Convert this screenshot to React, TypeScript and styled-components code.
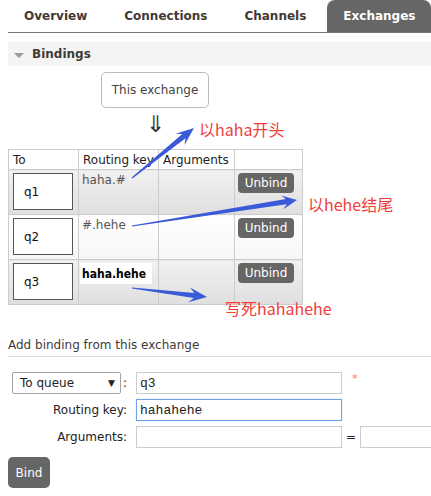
import React from "react";
import styled, { createGlobalStyle } from "styled-components";

const GlobalStyle = createGlobalStyle`
  html, body { margin: 0; padding: 0; background: #fff; overflow: hidden; }
  body {
    font-family: "DejaVu Sans", Verdana, sans-serif;
    font-size: 12px;
    color: #444;
  }
`;

const Page = styled.div`
  position: relative;
  width: 431px;
  height: 496px;
  overflow: hidden;
`;

const TabBar = styled.div`
  display: flex;
  margin-left: 8px;
  height: 32px;
  border-bottom: 1px solid #777;
`;

const Tab = styled.div<{ $active?: boolean }>`
  display: flex;
  align-items: center;
  padding: 0 16px;
  margin-right: 5px;
  font-weight: bold;
  white-space: nowrap;
  border-radius: 8px 8px 0 0;
  color: ${(p) => (p.$active ? "#fff" : "#3f3a36")};
  background: ${(p) => (p.$active ? "#666" : "transparent")};
`;

const Content = styled.div`
  margin-left: 8px;
`;

const SectionHeader = styled.div`
  margin-top: 9px;
  height: 24px;
  background: #f4f4f4;
  display: flex;
  align-items: center;
  gap: 8px;
  padding-left: 6px;
  font-weight: bold;
  color: #3f3a36;
`;

const Triangle = styled.span`
  width: 0;
  height: 0;
  margin-top: 2px;
  border-left: 5.5px solid transparent;
  border-right: 5.5px solid transparent;
  border-top: 5px solid #9a9a9a;
`;

const ExchangeBox = styled.div`
  margin: 6px 0 0 93px;
  width: 108px;
  height: 36px;
  box-sizing: border-box;
  border: 1px solid #bbb;
  border-radius: 5px;
  display: flex;
  align-items: center;
  justify-content: center;
  color: #444;
`;

const DownArrow = styled.div`
  margin-left: 93px;
  width: 108px;
  height: 41px;
  box-sizing: border-box;
  padding-top: 3px;
  text-align: center;
  font-size: 23px;
  line-height: 26px;
  font-weight: 300;
  color: #333;
`;

const Table = styled.table`
  border-collapse: collapse;
  table-layout: fixed;
  width: 294px;
`;

const HeadCell = styled.th`
  height: 20px;
  box-sizing: border-box;
  padding: 0 4px;
  border: 1px solid #ccc;
  text-align: left;
  font-weight: normal;
  color: #222;
  white-space: nowrap;
  overflow: hidden;
  background: #fff;
`;

const Cell = styled.td<{ $even?: boolean }>`
  height: 45px;
  box-sizing: border-box;
  padding: 2px 3px;
  border: 1px solid #ccc;
  vertical-align: top;
  color: #555;
  background: ${(p) =>
    p.$even
      ? "linear-gradient(#ffffff, #f6f6f6)"
      : "linear-gradient(#f1f1f1, #dfdfdf)"};
`;

const QBox = styled.div`
  width: 60px;
  height: 37px;
  box-sizing: border-box;
  margin: 1px 0 0 1px;
  border: 1px solid #555;
  background: #fff;
  display: flex;
  align-items: center;
  padding-left: 10px;
  color: #111;
`;

const KeyText = styled.div`
  padding-top: 1px;
  color: #555;
`;

const PastedKey = styled.span`
  display: inline-block;
  margin: 1px 0 0 -2px;
  padding: 4px 6px 3px 2px;
  background: #fff;
  color: #000;
  font-weight: bold;
  font-stretch: condensed;
  font-family: "DejaVu Sans Condensed", "DejaVu Sans", sans-serif;
`;

const SmallButton = styled.button`
  display: block;
  margin-top: 1px;
  width: 56px;
  height: 20px;
  padding: 0;
  border: none;
  border-radius: 4px;
  background: #666;
  color: #fff;
  font-family: "DejaVu Sans", Verdana, sans-serif;
  font-size: 12px;
`;

const AddHeading = styled.div`
  margin-top: 32px;
  padding-bottom: 3px;
  line-height: 16px;
  border-bottom: 1px solid #ddd;
  color: #3f3a36;
`;

const FormGrid = styled.div`
  margin-top: 15px;
  display: grid;
  grid-template-columns: 128px 206px 18px 100px;
  grid-auto-rows: 22px;
  row-gap: 5px;
`;

const LabelCell = styled.div`
  display: flex;
  align-items: center;
  justify-content: flex-end;
  padding-right: 9px;
  color: #222;
  white-space: nowrap;
`;

const SelectCell = styled(LabelCell)`
  justify-content: space-between;
  padding-left: 4px;
`;

const FakeSelect = styled.div`
  width: 109px;
  height: 22px;
  box-sizing: border-box;
  border: 1px solid #a3a3a3;
  border-radius: 2px;
  background: #fff;
  display: flex;
  align-items: center;
  justify-content: space-between;
  padding: 0 5px 0 7px;
  color: #222;
`;

const Caret = styled.span`
  font-size: 9px;
  color: #222;
`;

const TextInput = styled.input<{ $focused?: boolean }>`
  width: 100%;
  height: 22px;
  box-sizing: border-box;
  margin: 0;
  padding: 0 3px;
  border: 1px solid ${(p) => (p.$focused ? "#74a0e8" : "#ccc")};
  box-shadow: ${(p) => (p.$focused ? "0 0 1px 0 #9fc0f2" : "none")};
  border-radius: 0;
  outline: none;
  background: #fff;
  font-family: "Liberation Mono", "Courier New", monospace;
  font-size: 13px;
  color: #222;
`;

const Mark = styled.div<{ $required?: boolean }>`
  display: flex;
  align-items: ${(p) => (p.$required ? "flex-start" : "center")};
  justify-content: ${(p) => (p.$required ? "flex-start" : "center")};
  padding-left: ${(p) => (p.$required ? "10px" : "0")};
  color: ${(p) => (p.$required ? "#f27b7b" : "#222")};
  font-size: ${(p) => (p.$required ? "11px" : "12px")};
`;

const BindButton = styled.button`
  display: block;
  margin-top: 9px;
  width: 42px;
  height: 31px;
  padding: 0;
  border: none;
  border-radius: 5px;
  background: #666;
  color: #fff;
  font-family: "DejaVu Sans", Verdana, sans-serif;
  font-size: 12px;
`;

const Overlay = styled.svg`
  position: absolute;
  left: 0;
  top: 0;
  pointer-events: none;
`;

const Note = styled.span<{ $x: number; $y: number }>`
  position: absolute;
  left: ${(p) => p.$x}px;
  top: ${(p) => p.$y}px;
  font-family: "Noto Sans CJK SC", "Noto Sans", sans-serif;
  font-size: 16px;
  line-height: 18px;
  color: #f23c3c;
  white-space: nowrap;
`;

function arrowPoints(
  x0: number,
  y0: number,
  x1: number,
  y1: number,
  headLen: number,
  headHalf: number
): string {
  const dx = x1 - x0;
  const dy = y1 - y0;
  const L = Math.hypot(dx, dy);
  const ux = dx / L;
  const uy = dy / L;
  const nx = -uy;
  const ny = ux;
  const bx = x1 - ux * headLen;
  const by = y1 - uy * headLen;
  const sx = x1 - ux * headLen * 0.72;
  const sy = y1 - uy * headLen * 0.72;
  const shaft = 2.6;
  const tail = 0.6;
  const pts: [number, number][] = [
    [x0 + nx * tail, y0 + ny * tail],
    [sx + nx * shaft, sy + ny * shaft],
    [bx + nx * headHalf, by + ny * headHalf],
    [x1, y1],
    [bx - nx * headHalf, by - ny * headHalf],
    [sx - nx * shaft, sy - ny * shaft],
    [x0 - nx * tail, y0 - ny * tail],
  ];
  return pts.map((p) => `${p[0].toFixed(1)},${p[1].toFixed(1)}`).join(" ");
}

const bindings = [
  { queue: "q1", key: "haha.#", pasted: false },
  { queue: "q2", key: "#.hehe", pasted: false },
  { queue: "q3", key: "haha.hehe", pasted: true },
];

export default function App() {
  return (
    <Page>
      <GlobalStyle />
      <TabBar>
        <Tab>Overview</Tab>
        <Tab>Connections</Tab>
        <Tab>Channels</Tab>
        <Tab $active>Exchanges</Tab>
      </TabBar>
      <Content>
        <SectionHeader>
          <Triangle />
          Bindings
        </SectionHeader>
        <ExchangeBox>This exchange</ExchangeBox>
        <DownArrow>⇓</DownArrow>
        <Table>
          <colgroup>
            <col style={{ width: 70 }} />
            <col style={{ width: 80 }} />
            <col style={{ width: 76 }} />
            <col style={{ width: 68 }} />
          </colgroup>
          <thead>
            <tr>
              <HeadCell>To</HeadCell>
              <HeadCell>Routing key</HeadCell>
              <HeadCell>Arguments</HeadCell>
              <HeadCell />
            </tr>
          </thead>
          <tbody>
            {bindings.map((b, i) => (
              <tr key={b.queue}>
                <Cell $even={i % 2 === 1}>
                  <QBox>{b.queue}</QBox>
                </Cell>
                <Cell $even={i % 2 === 1}>
                  {b.pasted ? (
                    <PastedKey>{b.key}</PastedKey>
                  ) : (
                    <KeyText>{b.key}</KeyText>
                  )}
                </Cell>
                <Cell $even={i % 2 === 1} />
                <Cell $even={i % 2 === 1}>
                  <SmallButton>Unbind</SmallButton>
                </Cell>
              </tr>
            ))}
          </tbody>
        </Table>
        <AddHeading>Add binding from this exchange</AddHeading>
        <FormGrid>
          <SelectCell>
            <FakeSelect>
              To queue <Caret>▼</Caret>
            </FakeSelect>
            :
          </SelectCell>
          <TextInput defaultValue="q3" />
          <Mark $required>*</Mark>
          <div />
          <LabelCell>Routing key:</LabelCell>
          <TextInput $focused defaultValue="hahahehe" />
          <div />
          <div />
          <LabelCell>Arguments:</LabelCell>
          <TextInput defaultValue="" />
          <Mark>=</Mark>
          <TextInput defaultValue="" />
        </FormGrid>
        <BindButton>Bind</BindButton>
      </Content>
      <Overlay width={431} height={496} viewBox="0 0 431 496">
        <polygon points={arrowPoints(132, 178, 194, 128, 18, 7.2)} fill="#3a5bd8" />
        <polygon points={arrowPoints(132, 226, 297, 200, 15, 7)} fill="#3a5bd8" />
        <polygon points={arrowPoints(132, 288, 207, 297, 18, 7.5)} fill="#3a5bd8" />
      </Overlay>
      <Note $x={199} $y={120}>以haha开头</Note>
      <Note $x={308} $y={195}>以hehe结尾</Note>
      <Note $x={225} $y={299}>写死hahahehe</Note>
    </Page>
  );
}
